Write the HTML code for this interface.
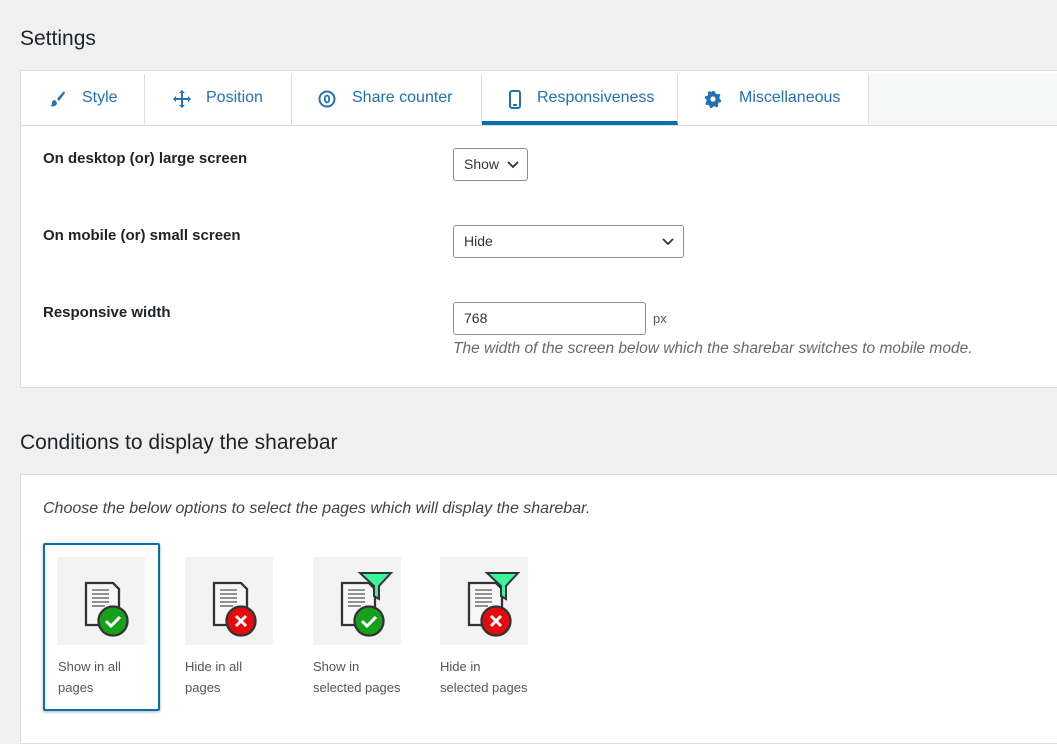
<!DOCTYPE html>
<html><head><meta charset="utf-8"><style>
body{margin:0;width:1057px;height:738px;background:#f0f0f1;font-family:"Liberation Sans",sans-serif;color:#3c434a;overflow:hidden;position:relative}
.abs{position:absolute}
h2{position:absolute;margin:0;font-size:21px;font-weight:normal;color:#1d2327;left:20px}
.panel{position:absolute;left:20px;width:1050px;background:#fff;border:1px solid #dcdcde;box-sizing:border-box}
.tabs{position:absolute;left:0;top:3px;height:51px;width:100%;background:#f6f7f7;border-bottom:1px solid #dcdcde}
.tab{position:absolute;top:0;height:50px;background:#fff;border-right:1px solid #dcdcde;color:#2271b1;font-size:16px;line-height:48px;box-sizing:border-box}
.tab svg{position:absolute;top:16px}
.tab span{position:absolute}
.lbl{position:absolute;left:22px;font-size:15px;font-weight:bold;color:#1d2327}
.sel{position:absolute;left:432px;border:1px solid #8c8f94;border-radius:3px;font-size:14px;color:#2c3338;box-sizing:border-box;background:#fff}
.sel span{position:absolute;left:10px;top:7px}
.sel svg{position:absolute;top:11px}
.card{position:absolute;top:557px;width:88px;height:88px;background:#f3f3f3}
.cap{position:absolute;top:656px;font-size:13px;line-height:21px;color:#50575e}
</style></head><body>
<h2 style="top:27px">Settings</h2>
<div class="panel" style="top:70px;height:318px">
 <div class="tabs"></div>
 <div class="tab" style="left:0;width:124px;top:3px"><svg style="left:27px" width="18" height="18" viewBox="0 0 18 18"><path d="M16 1 L9 9 L11 11 L17 3 Z" fill="#2271b1"/><path d="M7 10c-3 0-3 3-3 4s-1 2-2 2c3 1 7 0 7-3z" fill="#2271b1"/></svg><span style="left:61px">Style</span></div>
 <div class="tab" style="left:124px;width:147px;top:3px"><svg style="left:28px" width="18" height="18" viewBox="0 0 18 18" fill="#2271b1"><path d="M9 0l3 3H10v5h5V6l3 3-3 3v-2h-5v5h2l-3 3-3-3h2v-5H3v2L0 9l3-3v2h5V3H6z"/></svg><span style="left:61px">Position</span></div>
 <div class="tab" style="left:271px;width:190px;top:3px"><svg style="left:26px" width="18" height="18" viewBox="0 0 18 18"><circle cx="9" cy="9" r="7.5" fill="none" stroke="#2271b1" stroke-width="2"/><ellipse cx="9" cy="9" rx="2.2" ry="3.5" fill="none" stroke="#2271b1" stroke-width="1.8"/></svg><span style="left:60px">Share counter</span></div>
 <div class="tab" style="left:461px;width:196px;top:3px;border-bottom:4px solid #0073aa;height:51px"><svg style="left:26px" width="14" height="19" viewBox="0 0 14 19"><rect x="2" y="1" width="10" height="17" rx="2" fill="none" stroke="#2271b1" stroke-width="2"/><rect x="5" y="14" width="4" height="2" fill="#2271b1"/></svg><span style="left:55px">Responsiveness</span></div>
 <div class="tab" style="left:657px;width:191px;top:3px"><svg style="left:26px" width="18" height="18" viewBox="0 0 18 18"><path d="M9 1l2 .3.4 2 1.7 1 1.9-.7 1.4 1.6-1 1.8.3 2 1.6 1.2-.5 2-2 .3-1 1.7.6 1.9-1.7 1.3-1.7-1-2 .3-1.2 1.6-2-.6-.3-2-1.7-1-1.9.6L1.6 13l1-1.7-.3-2L.7 8.2l.6-2 2-.3 1-1.7L3.7 2.3 5.4 1l1.7 1z" fill="#2271b1"/><circle cx="9" cy="9" r="2.6" fill="#fff"/></svg><span style="left:61px">Miscellaneous</span></div>
 <div class="lbl" style="top:79px">On desktop (or) large screen</div>
 <div class="sel" style="top:77px;width:75px;height:33px"><span>Show</span><svg style="left:53px" width="12" height="10" viewBox="0 0 12 10"><path d="M1 2l5 5 5-5" fill="none" stroke="#2c3338" stroke-width="1.8"/></svg></div>
 <div class="lbl" style="top:156px">On mobile (or) small screen</div>
 <div class="sel" style="top:154px;width:231px;height:33px"><span>Hide</span><svg style="left:208px" width="12" height="10" viewBox="0 0 12 10"><path d="M1 2l5 5 5-5" fill="none" stroke="#2c3338" stroke-width="1.8"/></svg></div>
 <div class="lbl" style="top:233px">Responsive width</div>
 <div class="sel" style="top:231px;width:193px;height:33px"><span>768</span></div>
 <div class="abs" style="left:632px;top:240px;font-size:13px;color:#50575e">px</div>
 <div class="abs" style="left:432px;top:269px;font-size:15.5px;font-style:italic;color:#646970">The width of the screen below which the sharebar switches to mobile mode.</div>
</div>
<h2 style="top:431px">Conditions to display the sharebar</h2>
<div class="panel" style="top:474px;height:270px"></div>
<div class="abs" style="left:43px;top:500px;font-size:16px;font-style:italic;color:#3c434a">Choose the below options to select the pages which will display the sharebar.</div>
<div class="abs" style="left:43px;top:543px;width:117px;height:168px;border:2px solid #0073aa;border-radius:2px;box-sizing:border-box;box-shadow:0 1px 3px rgba(0,0,0,.3)"></div>
<svg width="0" height="0" style="position:absolute"><defs>
<g id="doc"><path d="M29 26h27l6 6v36H29z" fill="#f7f7f7" stroke="#333" stroke-width="2.3"/><g stroke="#555" stroke-width="1.3"><line x1="35" y1="33" x2="52" y2="33"/><line x1="35" y1="37" x2="52" y2="37"/><line x1="35" y1="41" x2="52" y2="41"/><line x1="35" y1="45" x2="52" y2="45"/><line x1="35" y1="49" x2="48" y2="49"/></g></g>
<g id="ok"><circle cx="56" cy="64" r="14.5" fill="#15a11a" stroke="#333" stroke-width="2.3"/><path d="M49 64l5 5 9-9" fill="none" stroke="#fff" stroke-width="3"/></g>
<g id="no"><circle cx="56" cy="64" r="14.5" fill="#e6090e" stroke="#333" stroke-width="2.3"/><path d="M51 59l10 10M61 59l-10 10" stroke="#fff" stroke-width="3"/></g>
<g id="fun"><path d="M47 16h31l-12 13v13l-5-3v-10z" fill="#3cf59a" stroke="#333" stroke-width="2"/></g>
</defs></svg>
<div class="card" style="left:57px"><svg width="88" height="88"><use href="#doc"/><use href="#ok"/></svg></div>
<div class="card" style="left:185px"><svg width="88" height="88"><use href="#doc"/><use href="#no"/></svg></div>
<div class="card" style="left:313px"><svg width="88" height="88"><use href="#doc"/><use href="#fun"/><use href="#ok"/></svg></div>
<div class="card" style="left:440px"><svg width="88" height="88"><use href="#doc"/><use href="#fun"/><use href="#no"/></svg></div>
<div class="cap" style="left:58px">Show in all<br>pages</div>
<div class="cap" style="left:185px">Hide in all<br>pages</div>
<div class="cap" style="left:313px">Show in<br>selected pages</div>
<div class="cap" style="left:440px">Hide in<br>selected pages</div>
</body></html>
